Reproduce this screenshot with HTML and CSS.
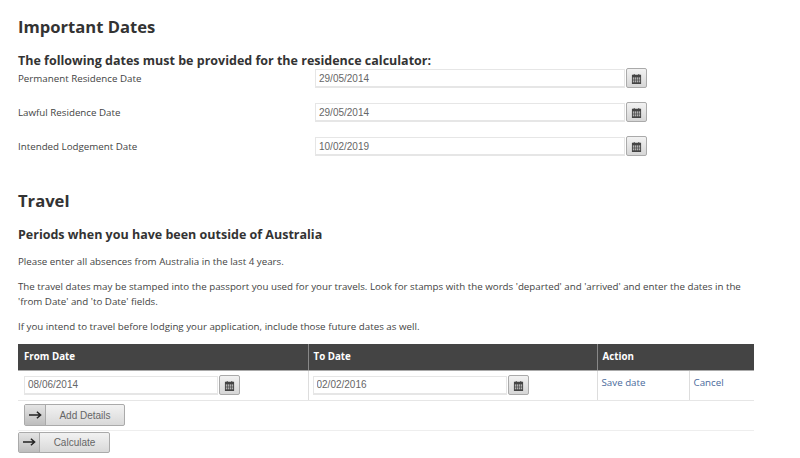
FILE: index.html
```html
<!DOCTYPE html>
<html lang="en">
<head>
<meta charset="utf-8">
<title>Important Dates</title>
<link rel="stylesheet" href="styles.css">
</head>
<body>
<svg class="defs" width="0" height="0" aria-hidden="true">
  <symbol id="cal" viewBox="0 0 12 12">
    <path fill="#444" d="M1 2h2V1h1v1h4V1h1v1h2v10H1z"/>
    <path fill="#d8d8d8" d="M2 5h1.500v1.200H2zM4.200 5h1.500v1.200H4.200zM6.400 5h1.500v1.200H6.400zM8.600 5H10v1.200H8.600zM2 7h1.500v1.200H2zM4.200 7h1.500v1.200H4.200zM6.400 7h1.500v1.200H6.400zM8.600 7H10v1.200H8.600zM2 9h1.500v1.200H2zM4.200 9h1.500v1.200H4.200zM6.400 9h1.500v1.200H6.400zM8.600 9H10v1.200H8.600z"/>
  </symbol>
  <symbol id="arrow" viewBox="0 0 14 10">
    <path fill="none" stroke="#222" stroke-width="1.600" d="M0 5h12M8.500 1.500 12.500 5 8.500 8.500"/>
  </symbol>
</svg>
<main class="page">
  <h1 class="title">Important Dates</h1>
  <h2 class="subtitle sub-first">The following dates must be provided for the residence calculator:</h2>
  <div class="date-rows">
    <div class="date-row">
      <label class="date-label">Permanent Residence Date</label>
      <div class="date-field wide"><input class="date-input" value="29/05/2014"><button class="cal-btn"><svg class="cal-icon"><use href="#cal"/></svg></button></div>
    </div>
    <div class="date-row">
      <label class="date-label">Lawful Residence Date</label>
      <div class="date-field wide"><input class="date-input" value="29/05/2014"><button class="cal-btn"><svg class="cal-icon"><use href="#cal"/></svg></button></div>
    </div>
    <div class="date-row">
      <label class="date-label">Intended Lodgement Date</label>
      <div class="date-field wide"><input class="date-input" value="10/02/2019"><button class="cal-btn"><svg class="cal-icon"><use href="#cal"/></svg></button></div>
    </div>
  </div>
  <h1 class="title travel">Travel</h1>
  <h2 class="subtitle sub-travel">Periods when you have been outside of Australia</h2>
  <p class="copy">Please enter all absences from Australia in the last 4 years.</p>
  <p class="copy">The travel dates may be stamped into the passport you used for your travels. Look for stamps with the words 'departed' and 'arrived' and enter the dates in the 'from Date' and 'to Date' fields.</p>
  <p class="copy">If you intend to travel before lodging your application, include those future dates as well.</p>
  <table class="travel-table">
    <colgroup><col class="c-from"><col class="c-to"><col class="c-save"><col class="c-cancel"></colgroup>
    <thead>
      <tr><th>From Date</th><th>To Date</th><th colspan="2">Action</th></tr>
    </thead>
    <tbody>
      <tr class="entry">
        <td class="from-cell"><div class="date-field narrow"><input class="date-input" value="08/06/2014"><button class="cal-btn"><svg class="cal-icon"><use href="#cal"/></svg></button></div></td>
        <td class="to-cell"><div class="date-field narrow"><input class="date-input" value="02/02/2016"><button class="cal-btn"><svg class="cal-icon"><use href="#cal"/></svg></button></div></td>
        <td class="act"><a href="#">Save date</a></td>
        <td class="act"><a href="#">Cancel</a></td>
      </tr>
      <tr class="adder">
        <td colspan="4"><button class="arrow-btn add"><span class="arrow-box"><svg class="arrow-icon"><use href="#arrow"/></svg></span><span class="arrow-text">Add Details</span></button></td>
      </tr>
    </tbody>
  </table>
  <button class="arrow-btn calc"><span class="arrow-box"><svg class="arrow-icon"><use href="#arrow"/></svg></span><span class="arrow-text">Calculate</span></button>
</main>
</body>
</html>
```
FILE: styles.css
```css
* { box-sizing: border-box; }
html, body { margin: 0; padding: 0; background: #fff; }
body { font-family: "Open Sans", sans-serif; font-size: 9.75px; color: #444; overflow: hidden; height: 458px; }
.defs { position: absolute; }
.page { padding: 17px 0 0 18px; width: 800px; }
.title { margin: 0; font-size: 16.6px; line-height: 20px; font-weight: 700; color: #333; }
.subtitle { margin: 0; font-size: 12.5px; line-height: 16px; font-weight: 700; color: #333; }
.sub-first { margin-top: 16px; }
.date-rows { display: flex; flex-direction: column; gap: 14px; margin-top: -1px; }
.date-row { display: flex; align-items: center; height: 20px; }
.date-label { width: 297px; flex: none; }
.date-field { display: flex; align-items: center; }
.wide { width: 332px; }
.wide .date-input { padding-top: 2px; }
.narrow { width: 216px; }
.date-input { flex: 1; min-width: 0; height: 19px; padding: 0 3px; border: 1px solid #e6e6e6; border-bottom-width: 2px; background: #fff; color: #666; font-family: "Liberation Sans", sans-serif; font-size: 10px; }
.cal-btn { flex: none; width: 21px; height: 20px; padding: 0; margin-left: 1px; display: flex; align-items: center; justify-content: center; border: 1px solid #aaa; border-radius: 2px; background: linear-gradient(#f2f2f2, #d6d6d6); }
.cal-icon { width: 11px; height: 11px; display: block; }
.travel { margin-top: 35px; }
.sub-travel { margin-top: 16px; }
.copy { margin: 10px 0 0; line-height: 15px; width: 736px; }
.sub-travel + .copy { margin-top: 11px; }
.travel-table { border-collapse: collapse; table-layout: fixed; width: 736px; margin-top: 10px; }
.c-from { width: 290px; }
.c-to { width: 289px; }
.c-save { width: 92px; }
.c-cancel { width: 65px; }
.travel-table th { height: 26px; padding: 0 5px; background: #444; color: #fff; text-align: left; font-size: 9.75px; font-weight: 700; border-left: 1px solid #888; border-bottom: 1px solid #aaa; }
.travel-table th:first-child { border-left: 0; padding-left: 6px; }
.entry td { height: 30px; padding: 0 5px; border-bottom: 1px solid #e6e6e6; border-left: 1px solid #ddd; vertical-align: middle; }
.entry td:first-child { border-left: 0; }
.entry .from-cell { padding-left: 6px; }
.entry .to-cell { padding-left: 4px; }
.entry .act { padding: 0 4px 5px; }
.act a { color: #4a6a9c; text-decoration: none; }
.adder td { height: 30px; padding: 0 5px; border-bottom: 1px solid #eee; }
.arrow-btn { display: flex; align-items: stretch; padding: 0; height: 21px; border: 1px solid #aaa; border-radius: 2px; background: linear-gradient(#f2f2f2, #d9d9d9); color: #666; font-family: "Liberation Sans", sans-serif; font-size: 10px; }
.add { width: 101px; height: 22px; margin-left: 1px; }
.calc { width: 92px; margin-top: 1px; }
.arrow-box { flex: none; width: 21px; display: flex; align-items: center; justify-content: center; border-right: 1px solid #aaa; background: linear-gradient(#e4e4e4, #bdbdbd); }
.arrow-icon { width: 13px; height: 10px; display: block; }
.arrow-text { flex: 1; align-self: center; text-align: center; }
```
